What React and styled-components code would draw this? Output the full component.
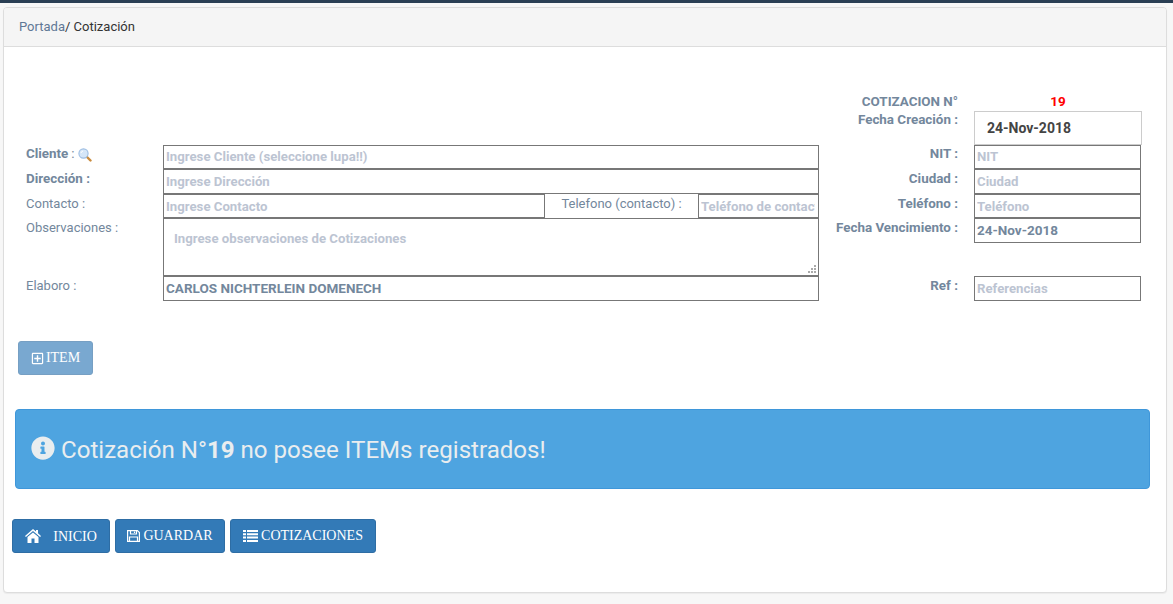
import React from 'react';
import styled, { createGlobalStyle } from 'styled-components';
import { FaInfoCircle, FaRegPlusSquare } from 'react-icons/fa';

const GlobalStyle = createGlobalStyle`
  html, body {
    margin: 0;
    padding: 0;
    background: #f7f7f7;
    font-family: Roboto, "Liberation Sans", sans-serif;
    font-size: 13px;
    color: #73879c;
  }
`

const TopBar = styled.div`
  height: 3px;
  background: #2a3f54;
`
const Page = styled.div`
  padding: 4px 6px 0 3px;
  height: 601px;
  box-sizing: border-box;
  overflow: hidden;
`
const Card = styled.div`
  width: 1164px;
  height: 586px;
  box-sizing: border-box;
  background: #fff;
  border: 1px solid #ddd;
  border-radius: 4px;
  box-shadow: 0 1px 1px rgba(0, 0, 0, .05);
  overflow: hidden;
`
const CardHeader = styled.div`
  height: 39px;
  box-sizing: border-box;
  padding: 10px 15px 0;
  background: #f5f5f5;
  border-bottom: 1px solid #ddd;
  color: #333;
  line-height: 17px;
`
const Crumb = styled.a`
  color: #5f7896;
`
const CardBody = styled.div`
  padding: 44px 8px 0;
`
const Row = styled.div`
  display: grid;
  grid-template-columns: 137px 656px 155px 167px;
  margin-left: 14px;
  height: ${({ $h }) => $h}px;
`
const RightHead = styled.div`
  display: grid;
  grid-template-columns: 155px 168px;
  margin-left: 807px;
  height: ${({ $h }) => $h}px;
`
const Label = styled.label`
  font-weight: ${({ $bold }) => ($bold ? 700 : 400)};
  font-size: ${({ $bold }) => ($bold ? 13.4 : 13)}px;
  line-height: 18px;
  margin-top: ${({ $top }) => $top ?? 1}px;
  color: #73879c;
  display: flex;
  gap: 3px;
  align-items: flex-start;
`
const RightLabel = styled(Label).attrs({ $bold: true })`
  justify-content: flex-end;
  padding-right: 16px;
`
const Colon = styled.span`
  font-weight: 400;
`
const LupaSvg = styled.svg`
  margin: 3px 0 0;
`
const Field = styled.input`
  display: block;
  width: 100%;
  height: ${({ $h }) => $h}px;
  box-sizing: border-box;
  margin: 0;
  padding: 0 3px ${({ $flat }) => ($flat ? 0 : 2)}px 2px;
  border: 1px solid #777;
  outline: 0;
  background: #fff;
  font: 700 ${({ $filled }) => ($filled ? 13.5 : 13.2)}px Roboto, "Liberation Sans", sans-serif;
  color: #73879c;
  &::placeholder {
    color: #bcc4d2;
    opacity: 1;
  }
`
const ContactCell = styled.div`
  display: grid;
  grid-template-columns: 382px 153px 121px;
`
const ContactLabel = styled.div`
  text-align: center;
  line-height: 18px;
  margin-top: 1px;
`
const NotesWrap = styled.div`
  position: relative;
  height: 58px;
`
const Notes = styled.textarea`
  display: block;
  width: 100%;
  height: 58px;
  box-sizing: border-box;
  margin: 0;
  padding: 12px 10px 0;
  border: 1px solid #777;
  outline: 0;
  resize: none;
  font: 700 13.2px Roboto, "Liberation Sans", sans-serif;
  &::placeholder {
    color: #bcc4d2;
    opacity: 1;
  }
`
const Grip = styled.svg`
  position: absolute;
  right: 3px;
  bottom: 3px;
`
const HeadNumber = styled.div`
  text-align: center;
  color: #f00;
  font-weight: 700;
  font-size: 13.5px;
  line-height: 18px;
  padding-top: 1px;
`
const DateBox = styled.div`
  height: 34px;
  box-sizing: border-box;
  padding: 0 12px;
  border: 1px solid #ccc;
  color: #444;
  font-size: 14px;
  font-weight: 700;
  line-height: 32px;
`
const ItemBar = styled.div`
  margin: 40px 0 0 6px;
`
const Button = styled.button`
  display: inline-flex;
  align-items: center;
  justify-content: center;
  gap: ${({ $gap }) => $gap || 3}px;
  height: 34px;
  width: ${({ $w }) => $w}px;
  box-sizing: border-box;
  padding: 0;
  background: #337ab7;
  border: 1px solid #2e6da4;
  border-radius: 3px;
  color: #fff;
  font: 14px "Liberation Serif", serif;
  opacity: ${({ $faded }) => ($faded ? 0.65 : 1)};
  svg {
    flex: none;
  }
`
const InicioText = styled.span`
  position: relative;
  top: 1px;
`
const Alert = styled.div`
  display: flex;
  align-items: center;
  gap: 6px;
  height: 80px;
  box-sizing: border-box;
  margin: 34px 8px 0 3px;
  padding: 2px 15px 0;
  background: #4ea4e0;
  border: 1px solid #3f97da;
  border-radius: 4px;
  color: #e9edef;
  font-size: 24.1px;
  svg {
    position: relative;
    top: -2px;
  }
  b {
    font-weight: 700;
  }
`
const Actions = styled.div`
  display: flex;
  gap: 5px;
  margin: 30px 0 0;
`

const LupaIcon = () => (
  <LupaSvg width="14" height="14" viewBox="0 0 14 14">
    <path d="M8.5 8.5l4 4" stroke="#c98a3c" strokeWidth="2.4" strokeLinecap="round" />
    <circle cx="5.5" cy="5.5" r="4.6" fill="#d5e6f8" stroke="#9dbde2" strokeWidth="1.1" />
    <path d="M3 5a2.6 2.6 0 0 1 2-2" stroke="#fff" fill="none" />
  </LupaSvg>
)

const HomeIcon = () => (
  <svg width="16" height="14" viewBox="0 0 16 14" fill="currentColor">
    <path d="M8 0l3 2.6V1h2v3.3L16 7l-.9 1L8 2 .9 8 0 7z" />
    <path d="M2.5 8L8 3.4 13.5 8v6H9.5V9.5h-3V14h-4z" />
  </svg>
)

const SaveIcon = () => (
  <svg width="13" height="12" viewBox="0 0 13 12" fill="none" stroke="currentColor" strokeWidth="1.2">
    <path d="M.6.6h9.8l2 2v8.8H.6z" />
    <path d="M3.5.6v3.4h6V.6M2.5 11.4V7h8v4.4" />
    <path d="M7.5 1.5v1.5" />
  </svg>
)

const ListIcon = () => (
  <svg width="15" height="12" viewBox="0 0 15 12" fill="currentColor">
    <path d="M0 0h3v2H0zM4 0h11v2H4zM0 3.3h3v2H0zM4 3.3h11v2H4zM0 6.6h3v2H0zM4 6.6h11v2H4zM0 10h3v2H0zM4 10h11v2H4z" />
  </svg>
)

const App = () => {
  return (
    <>
      <GlobalStyle />
      <TopBar />
      <Page>
        <Card>
          <CardHeader>
            <Crumb>Portada</Crumb>/ Cotización
          </CardHeader>
          <CardBody>
            <RightHead $h={20}>
              <RightLabel $top={2}>COTIZACION N°</RightLabel>
              <HeadNumber>19</HeadNumber>
            </RightHead>
            <RightHead $h={34}>
              <RightLabel $top={0}>Fecha Creación :</RightLabel>
              <DateBox>24-Nov-2018</DateBox>
            </RightHead>
            <Row $h={24}>
              <Label $bold $top={0}>Cliente <Colon>:</Colon> <LupaIcon /></Label>
              <Field $h={24} placeholder="Ingrese Cliente (seleccione lupa!!)" />
              <RightLabel $top={0}>NIT :</RightLabel>
              <Field $h={24} placeholder="NIT" />
            </Row>
            <Row $h={25}>
              <Label $bold>Dirección :</Label>
              <Field $h={25} $flat placeholder="Ingrese Dirección" />
              <RightLabel>Ciudad :</RightLabel>
              <Field $h={25} $flat placeholder="Ciudad" />
            </Row>
            <Row $h={24}>
              <Label>Contacto :</Label>
              <ContactCell>
                <Field $h={24} $flat placeholder="Ingrese Contacto" />
                <ContactLabel>Telefono (contacto) :</ContactLabel>
                <Field $h={24} $flat placeholder="Teléfono de contacto" />
              </ContactCell>
              <RightLabel>Teléfono :</RightLabel>
              <Field $h={24} $flat placeholder="Teléfono" />
            </Row>
            <Row $h={58}>
              <Label>Observaciones :</Label>
              <NotesWrap>
                <Notes placeholder="Ingrese observaciones de Cotizaciones" />
                <Grip width="8" height="8" viewBox="0 0 8 8" fill="#aaa">
                  <path d="M6 0h2v2H6zM3 3h2v2H3zM6 3h2v2H6zM0 6h2v2H0zM3 6h2v2H3zM6 6h2v2H6z" />
                </Grip>
              </NotesWrap>
              <RightLabel>Fecha Vencimiento :</RightLabel>
              <Field $h={25} $filled defaultValue="24-Nov-2018" />
            </Row>
            <Row $h={25}>
              <Label>Elaboro :</Label>
              <Field $h={25} $filled defaultValue="CARLOS NICHTERLEIN DOMENECH" />
              <RightLabel $top={1}>Ref :</RightLabel>
              <Field $h={25} $flat placeholder="Referencias" />
            </Row>
            <ItemBar>
              <Button $faded $w={75} $gap={2}><FaRegPlusSquare size={13} />ITEM</Button>
            </ItemBar>
            <Alert>
              <FaInfoCircle size={24} />
              <span>Cotización N°<b>19</b> no posee ITEMs registrados!</span>
            </Alert>
            <Actions>
              <Button $w={98} $gap={12}><HomeIcon /><InicioText>INICIO</InicioText></Button>
              <Button $w={110}><SaveIcon />GUARDAR</Button>
              <Button $w={146}><ListIcon />COTIZACIONES</Button>
            </Actions>
          </CardBody>
        </Card>
      </Page>
    </>
  );
}

export default App;
